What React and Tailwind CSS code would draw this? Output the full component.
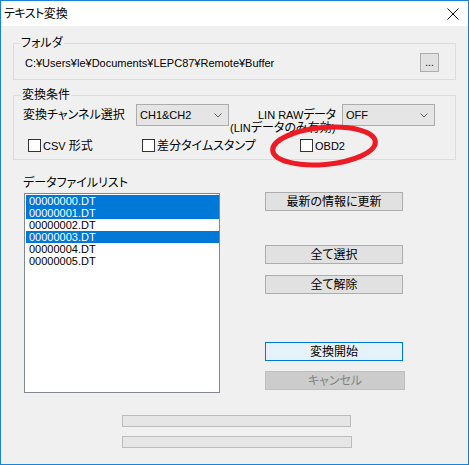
import React from "react";

const J = ({ children, className = "" }) => (
  <span className={`text-[12px] [font-feature-settings:'palt'] ${className}`}>{children}</span>
);

function Check({ label, className = "" }) {
  return (
    <div className={`flex items-center ${className}`}>
      <span className="w-[13px] h-[13px] border border-[#333333] bg-white" />
      <span className="ml-[2px]">{label}</span>
    </div>
  );
}

function Combo({ value }) {
  return (
    <div className="w-[93px] h-[22px] flex items-center justify-between border border-[#acacac] bg-[#e5e5e5] pl-[3px] pr-[6px]">
      <span>{value}</span>
      <svg width="8" height="5" viewBox="0 0 8 5">
        <path d="M0.5 0.5 L4 4 L7.5 0.5" fill="none" stroke="#606060" />
      </svg>
    </div>
  );
}

function Btn({ children, className = "" }) {
  return (
    <div className={`h-[19px] flex items-center justify-center border ${className}`}>
      <J>{children}</J>
    </div>
  );
}

const files = [
  { name: "00000000.DT", sel: true },
  { name: "00000001.DT", sel: true },
  { name: "00000002.DT", sel: false },
  { name: "00000003.DT", sel: true },
  { name: "00000004.DT", sel: false },
  { name: "00000005.DT", sel: false },
];

export default function App() {
  return (
    <div className="relative w-[469px] h-[465px] flex flex-col border border-[#1883d7] bg-white text-[11px] leading-[14px] text-black font-['Liberation_Sans','Noto_Sans_CJK_JP',sans-serif]">
      {/* title bar */}
      <div className="h-[25px] flex items-center justify-between pl-[3px] pr-[9px] bg-white">
        <span className="leading-[14px]">
          <J className="text-[10px] tracking-[-0.5px]">テキスト</J>
          <J>変換</J>
        </span>
        <svg width="12" height="12" viewBox="0 0 12 12">
          <path d="M0.5 0.5 L11.5 11.5 M11.5 0.5 L0.5 11.5" stroke="#111" strokeWidth="1" />
        </svg>
      </div>

      <div className="flex-1 bg-[#f0f0f0] px-[12px] pt-[10px] flex flex-col">
        {/* folder */}
        <fieldset className="border border-[#dcdcdc]">
          <legend className="ml-[6px] px-[1px] leading-[14px]">
            <J>フォルダ</J>
          </legend>
          <div className="flex items-center justify-between mt-[3px] mb-[7px] pl-[11px] pr-[16px] h-[19px]">
            <span>C:¥Users¥le¥Documents¥LEPC87¥Remote¥Buffer</span>
            <div className="w-[19px] h-[19px] flex items-center justify-center border border-[#adadad] bg-[#e1e1e1] text-[10px] leading-[10px]">
              ...
            </div>
          </div>
        </fieldset>

        {/* conversion options */}
        <fieldset className="mt-[8px] border border-[#dcdcdc]">
          <legend className="ml-[7px] px-[1px] leading-[14px]">
            <J>変換条件</J>
          </legend>
          <div className="mt-[2px] h-[22px] flex items-center pl-[9px]">
            <J className="w-[113px]">変換チャンネル選択</J>
            <Combo value="CH1&CH2" />
            <span className="ml-[29px] w-[84px]">
              LIN RAW<J className="tracking-[-0.5px]">データ</J>
            </span>
            <Combo value="OFF" />
          </div>
          <div className="-mt-[5px] h-[14px] pl-[216px]">
            (LIN<J>データのみ有効</J>)
          </div>
          <div className="mt-[2px] h-[17px] mb-[5px] flex items-center pl-[14px]">
            <Check className="w-[114px]" label={<>CSV <J>形式</J></>} />
            <Check className="w-[158px]" label={<J>差分タイムスタンプ</J>} />
            <Check label="OBD2" />
          </div>
        </fieldset>

        {/* list and buttons */}
        <div className="mt-[16px] flex">
          <div className="ml-[10px] w-[197px] flex flex-col">
            <J className="leading-[14px]">データファイルリスト</J>
            <div className="mt-[3px] ml-[1px] w-[196px] h-[200px] border border-[#828790] bg-white p-[1px] pr-0">
              {files.map((f) => (
                <div
                  key={f.name}
                  className={`h-[12px] leading-[12px] pl-[3px] ${f.sel ? "bg-[#0078d7] text-white" : ""}`}
                >
                  {f.name}
                </div>
              ))}
            </div>
          </div>
          <div className="ml-[45px] pt-[16px] flex flex-col">
            <Btn className="w-[138px] border-[#adadad] bg-[#e1e1e1]">最新の情報に更新</Btn>
            <Btn className="mt-[34px] w-[138px] border-[#adadad] bg-[#e1e1e1]">全て選択</Btn>
            <Btn className="mt-[11px] w-[138px] border-[#adadad] bg-[#e1e1e1]">全て解除</Btn>
            <Btn className="mt-[48px] w-[138px] border-[#0078d7] bg-[#e5f1fb]">変換開始</Btn>
            <Btn className="mt-[10px] w-[140px] border-[#bfbfbf] bg-[#cccccc] text-[#838383]">キャンセル</Btn>
          </div>
        </div>

        {/* progress bars */}
        <div className="mt-[22px] ml-[109px] w-[229px] h-[12px] border border-[#bcbcbc] bg-[#e6e6e6]" />
        <div className="mt-[9px] ml-[109px] w-[230px] h-[12px] border border-[#bcbcbc] bg-[#e6e6e6]" />
      </div>

      {/* red annotation ellipse */}
      <svg className="absolute left-[264px] top-[118px] pointer-events-none" width="120" height="54" viewBox="0 0 120 54">
        <ellipse cx="59" cy="27" rx="51.5" ry="18.5" fill="none" stroke="#ed1c24" strokeWidth="5" transform="rotate(-5 59 27)" />
      </svg>
    </div>
  );
}
